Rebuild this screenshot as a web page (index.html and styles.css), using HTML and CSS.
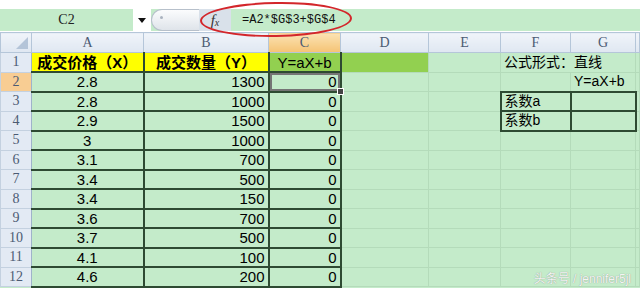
FILE: index.html
```html
<!DOCTYPE html>
<html>
<head>
    <title>成交价格与成交数量</title>
    <link rel="stylesheet" href="styles.css">
</head>
<body>
    <div class="top"></div>
    <div class="fbar">
        <div class="namebox">C2</div>
        <div class="drop"><span class="arrow"></span></div>
        <div class="knob"><span class="dot"></span></div>
        <div class="fx">f<sub>x</sub></div>
        <div class="formula">=A2*$G$3+$G$4</div>
        <div class="ring"></div>
    </div>

    <table class="sheet">
        <colgroup>
            <col class="w-rh"><col class="w-a"><col class="w-b"><col class="w-c">
            <col class="w-d"><col class="w-e"><col class="w-f"><col class="w-g"><col>
        </colgroup>
        <tr class="heads">
            <th class="corner"><span class="tri"></span></th>
            <th>A</th><th>B</th><th class="on">C</th><th>D</th><th>E</th><th>F</th><th>G</th><th></th>
        </tr>
        <tr>
            <th class="rh">1</th>
            <td class="a yel bold">成交价格（X）</td>
            <td class="b yel bold mid">成交数量（Y）</td>
            <td class="c lime mid">Y=aX+b</td>
            <td class="lime"></td><td></td>
            <td class="spill note">公式形式：直线</td><td></td><td></td>
        </tr>
        <tr>
            <th class="rh on">2</th>
            <td class="a">2.8</td><td class="b">1300</td>
            <td class="c sel">0<span class="handle"></span></td>
            <td class="d"></td><td></td><td></td><td class="note">Y=aX+b</td><td></td>
        </tr>
        <tr>
            <th class="rh">3</th>
            <td class="a">2.8</td><td class="b">1000</td><td class="c">0</td>
            <td class="d"></td><td></td><td class="box note">系数a</td><td class="box"></td><td></td>
        </tr>
        <tr>
            <th class="rh">4</th>
            <td class="a">2.9</td><td class="b">1500</td><td class="c">0</td>
            <td class="d"></td><td></td><td class="box note">系数b</td><td class="box"></td><td></td>
        </tr>
        <tr>
            <th class="rh">5</th>
            <td class="a">3</td><td class="b">1000</td><td class="c">0</td>
            <td class="d"></td><td></td><td></td><td></td><td></td>
        </tr>
        <tr>
            <th class="rh">6</th>
            <td class="a">3.1</td><td class="b">700</td><td class="c">0</td>
            <td class="d"></td><td></td><td></td><td></td><td></td>
        </tr>
        <tr>
            <th class="rh">7</th>
            <td class="a">3.4</td><td class="b">500</td><td class="c">0</td>
            <td class="d"></td><td></td><td></td><td></td><td></td>
        </tr>
        <tr>
            <th class="rh">8</th>
            <td class="a">3.4</td><td class="b">150</td><td class="c">0</td>
            <td class="d"></td><td></td><td></td><td></td><td></td>
        </tr>
        <tr>
            <th class="rh">9</th>
            <td class="a">3.6</td><td class="b">700</td><td class="c">0</td>
            <td class="d"></td><td></td><td></td><td></td><td></td>
        </tr>
        <tr>
            <th class="rh">10</th>
            <td class="a">3.7</td><td class="b">500</td><td class="c">0</td>
            <td class="d"></td><td></td><td></td><td></td><td></td>
        </tr>
        <tr>
            <th class="rh">11</th>
            <td class="a">4.1</td><td class="b">100</td><td class="c">0</td>
            <td class="d"></td><td></td><td></td><td></td><td></td>
        </tr>
        <tr>
            <th class="rh">12</th>
            <td class="a">4.6</td><td class="b">200</td><td class="c">0</td>
            <td class="d"></td><td></td><td></td><td></td><td></td>
        </tr>
    </table>

    <div class="mark">头条号 / jennifer5jl</div>
</body>
</html>
```

FILE: styles.css
```css
body {
    margin: 0;
    width: 640px;
    height: 288px;
    overflow: hidden;
    background: #c4ebca;
    font-family: "Liberation Sans", "Noto Sans CJK SC", sans-serif;
    position: relative;
}
.top {
    height: 9px;
    background: #fff;
}
.fbar {
    display: flex;
    height: 22px;
    background: #c4ebca;
    border-bottom: 1px solid #fff;
    position: relative;
}
.namebox {
    width: 133px;
    text-align: center;
    font: 14px/22px "Liberation Serif", serif;
    color: #222;
}
.drop {
    width: 18px;
    background: #fff;
    display: flex;
    align-items: center;
    justify-content: center;
}
.arrow {
    width: 0;
    height: 0;
    border-left: 4px solid transparent;
    border-right: 4px solid transparent;
    border-top: 5px solid #111;
}
.knob {
    width: 48px;
    background: linear-gradient(#fbfcfd, #dfe4ea);
    border: 1px solid #b7c0cb;
    border-right: none;
    border-radius: 11px 0 0 11px;
    box-sizing: border-box;
    position: relative;
}
.dot {
    position: absolute;
    left: 8px;
    top: 6px;
    width: 3px;
    height: 3px;
    border-radius: 50%;
    background: #aab3bf;
}
.fx {
    width: 32px;
    background: #d9e1ea;
    text-align: center;
    font: italic 15px/22px "Liberation Serif", serif;
    color: #333;
}
.fx sub {
    font-size: 10px;
    vertical-align: -1px;
}
.formula {
    flex: 1;
    padding-left: 11px;
    font: 12px/22px "Liberation Mono", monospace;
    color: #111;
}
.ring {
    position: absolute;
    left: 200px;
    top: -7px;
    width: 152px;
    height: 35px;
    border: 2.5px solid #d3262b;
    border-radius: 50%;
    box-sizing: border-box;
    transform: rotate(-1deg);
}

.sheet {
    border-collapse: collapse;
    table-layout: fixed;
    width: 640px;
    font-size: 15px;
    color: #000;
}
.w-rh { width: 31px; }
.w-a { width: 112px; }
.w-b { width: 125px; }
.w-c { width: 72px; }
.w-d { width: 88px; }
.w-e { width: 72px; }
.w-f { width: 70px; }
.w-g { width: 65px; }

.sheet tr { height: 19.5px; }
.sheet tr.heads { height: 20px; }
.sheet td {
    padding: 0 3px;
    border: 1px solid #b4dbba;
    white-space: nowrap;
    line-height: 17px;
}
.heads th {
    background: linear-gradient(#f0f4fa, #dfe7f1);
    border: 1px solid #b5c6d9;
    font: 14px "Liberation Serif", serif;
    color: #4c5b73;
    font-weight: normal;
    padding: 0;
}
.heads th.on {
    background: linear-gradient(#fbe3b4, #f5c374);
}
.heads th.corner {
    position: relative;
}
.tri {
    position: absolute;
    right: 3px;
    bottom: 3px;
    width: 0;
    height: 0;
    border-left: 12px solid transparent;
    border-bottom: 12px solid #b4c4d8;
}
th.rh {
    background: #e3eaf4;
    border: 1px solid #c4d1e0;
    border-right: 1px solid #9fb3ca;
    font: 14px "Liberation Serif", serif;
    color: #4c5b73;
    font-weight: normal;
    padding: 0;
}
th.rh.on {
    background: #f8cd93;
}

td.a, td.b, td.c {
    border-right: 2px solid #2e4a32;
    border-bottom: 2px solid #2e4a32;
}
td.a { text-align: center; }
td.b, td.c { text-align: right; }
td.mid { text-align: center; }
td.yel { background: #ffff00; }
td.lime { background: #92d050; }
td.bold { font-weight: bold; }
td.note {
    font-size: 14px;
    padding-left: 3px;
}
td.spill {
    border-right-color: transparent;
}
td.box {
    border: 2px solid #2e4a32;
}
td.sel {
    position: relative;
    box-shadow: inset 0 0 0 2px #757575;
}
.handle {
    position: absolute;
    right: -4px;
    bottom: -4px;
    width: 5px;
    height: 5px;
    background: #444;
    border: 1px solid #fff;
}
.mark {
    position: absolute;
    right: 9px;
    bottom: 2px;
    font-size: 12px;
    color: #f4f4f4;
    text-shadow: 0 0 1px #7a8a7c;
}
```
